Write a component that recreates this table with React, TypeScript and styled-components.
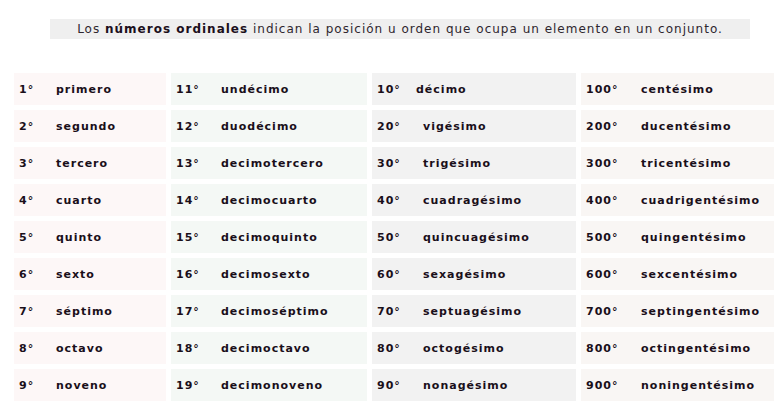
import React from "react";
import styled, { createGlobalStyle } from "styled-components";

const GlobalStyle = createGlobalStyle`
  body {
    margin: 0;
    background: #ffffff;
    overflow: hidden;
    font-family: "DejaVu Sans", Verdana, sans-serif;
  }
`;

const Page = styled.div`
  padding: 19px 0 0 14px;
  width: 790px;
`;

const Intro = styled.p`
  margin: 0 0 0 36px;
  width: 700px;
  height: 20px;
  line-height: 21px;
  background: #efefef;
  color: #2e262e;
  font-size: 12px;
  letter-spacing: 1px;
  text-align: center;
  white-space: nowrap;
  b {
    color: #1c101c;
  }
`;

const Grid = styled.div`
  margin-top: 34px;
  display: grid;
  grid-template-columns: 152px 196px 204px 196px;
  grid-auto-flow: column;
  grid-template-rows: repeat(9, 32px);
  gap: 5px;
`;

const Cell = styled.div<{ $bg: string }>`
  display: flex;
  align-items: center;
  padding: 1px 0 0 5px;
  background: ${(p) => p.$bg};
  color: #1a0f1a;
  font-size: 11px;
  font-weight: bold;
  letter-spacing: 1px;
  white-space: nowrap;
`;

const Num = styled.span<{ $w: number }>`
  display: inline-block;
  width: ${(p) => p.$w}px;
`;

type Col = { bg: string; w: number; items: [string, string][] };

const columns: Col[] = [
  {
    bg: "#fdf7f7",
    w: 37,
    items: [
      ["1°", "primero"],
      ["2°", "segundo"],
      ["3°", "tercero"],
      ["4°", "cuarto"],
      ["5°", "quinto"],
      ["6°", "sexto"],
      ["7°", "séptimo"],
      ["8°", "octavo"],
      ["9°", "noveno"],
    ],
  },
  {
    bg: "#f4f8f5",
    w: 45,
    items: [
      ["11°", "undécimo"],
      ["12°", "duodécimo"],
      ["13°", "decimotercero"],
      ["14°", "decimocuarto"],
      ["15°", "decimoquinto"],
      ["16°", "decimosexto"],
      ["17°", "decimoséptimo"],
      ["18°", "decimoctavo"],
      ["19°", "decimonoveno"],
    ],
  },
  {
    bg: "#f2f2f2",
    w: 46,
    items: [
      ["10°", "décimo"],
      ["20°", "vigésimo"],
      ["30°", "trigésimo"],
      ["40°", "cuadragésimo"],
      ["50°", "quincuagésimo"],
      ["60°", "sexagésimo"],
      ["70°", "septuagésimo"],
      ["80°", "octogésimo"],
      ["90°", "nonagésimo"],
    ],
  },
  {
    bg: "#f9f6f4",
    w: 55,
    items: [
      ["100°", "centésimo"],
      ["200°", "ducentésimo"],
      ["300°", "tricentésimo"],
      ["400°", "cuadrigentésimo"],
      ["500°", "quingentésimo"],
      ["600°", "sexcentésimo"],
      ["700°", "septingentésimo"],
      ["800°", "octingentésimo"],
      ["900°", "noningentésimo"],
    ],
  },
];

export default function App() {
  return (
    <>
      <GlobalStyle />
      <Page>
        <Intro>
          Los <b>números ordinales</b> indican la posición u orden que ocupa un
          elemento en un conjunto.
        </Intro>
        <Grid>
          {columns.map((col) =>
            col.items.map(([n, name]) => (
              <Cell key={n} $bg={col.bg}>
                <Num $w={n === "10°" ? 39 : col.w}>{n}</Num>
                {name}
              </Cell>
            ))
          )}
        </Grid>
      </Page>
    </>
  );
}
